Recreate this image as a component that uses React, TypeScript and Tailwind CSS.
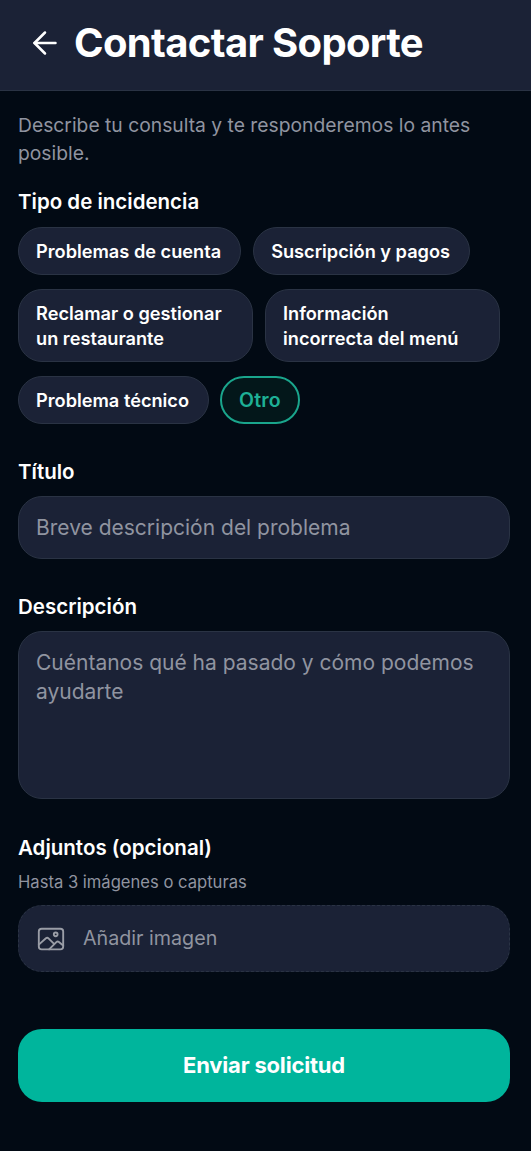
import { ArrowLeft } from "lucide-react";
import { IoImageOutline } from "react-icons/io5";

const chips = [
  { label: "Problemas de cuenta" },
  { label: "Suscripción y pagos" },
  { label: "Reclamar o gestionar un restaurante", width: "w-[235px]" },
  { label: "Información incorrecta del menú", width: "w-[235px]" },
  { label: "Problema técnico" },
];

function Label({ children }: { children: React.ReactNode }) {
  return <p className="text-[20.5px] leading-[28px] font-semibold text-white">{children}</p>;
}

export default function App() {
  return (
    <div className="flex h-[1151px] w-[531px] flex-col overflow-hidden bg-[#020a14] font-['Inter',sans-serif]">
      <header className="flex h-[91px] items-center gap-[11px] border-b border-[#2a3344] bg-[#1b2236] pb-[4px] pl-[27px]">
        <ArrowLeft className="h-[36px] w-[36px] text-white" strokeWidth={1.7} />
        <h1 className="text-[40px] leading-[48px] font-bold tracking-[-0.65px] text-white">Contactar Soporte</h1>
      </header>

      <main className="flex flex-col pt-[20px] pr-[21px] pl-[18px]">
        <p className="text-[19.3px] leading-[28px] text-[#9094a0]">
          Describe tu consulta y te responderemos lo antes posible.
        </p>

        <div className="mt-[21px]">
          <Label>Tipo de incidencia</Label>
        </div>
        <div className="mt-[11px] flex flex-wrap gap-x-[12px] gap-y-[14px]">
          {chips.map((chip) => (
            <div
              key={chip.label}
              className={`rounded-[24px] border border-[#2a3344] bg-[#1b2236] py-[10.5px] pr-[19px] pl-[17px] text-[18.2px] leading-[25px] font-semibold text-white ${chip.width ?? ""}`}
            >
              {chip.label}
            </div>
          ))}
          <div className="-ml-px rounded-[24px] border-2 border-[#1aa58c] bg-[#03171a] px-[17px] py-[9.5px] text-[19.5px] leading-[25px] font-semibold tracking-[0.2px] text-[#1eb096]">
            Otro
          </div>
        </div>

        <div className="mt-[34px]">
          <Label>Título</Label>
        </div>
        <div className="mt-[10px] flex h-[63px] items-center rounded-[24px] border border-[#2a3344] bg-[#1b2236] px-[17px] text-[21px] text-[#9094a0]">
          Breve descripción del problema
        </div>

        <div className="mt-[34px]">
          <Label>Descripción</Label>
        </div>
        <div className="mt-[10px] h-[168px] rounded-[24px] border border-[#2a3344] bg-[#1b2236] px-[17px] pt-[17px] text-[21px] leading-[28.5px] text-[#9094a0]">
          Cuéntanos qué ha pasado y cómo podemos ayudarte
        </div>

        <div className="mt-[35px]">
          <Label>Adjuntos (opcional)</Label>
        </div>
        <p className="mt-[9px] text-[16.6px] leading-[22px] text-[#9094a0]">Hasta 3 imágenes o capturas</p>
        <div className="mt-[12px] flex h-[67px] items-center gap-[17px] rounded-[24px] border border-dashed border-[#2a3344] bg-[#1b2236] pl-[17px] text-[19.7px] text-[#9094a0]">
          <IoImageOutline className="h-[30px] w-[30px] text-[#9a9da6]" />
          Añadir imagen
        </div>

        <button className="mt-[57px] flex h-[73px] items-center justify-center rounded-[24px] bg-[#00b59c] text-[22px] font-bold tracking-[-0.2px] text-white">
          Enviar solicitud
        </button>
      </main>
    </div>
  );
}
